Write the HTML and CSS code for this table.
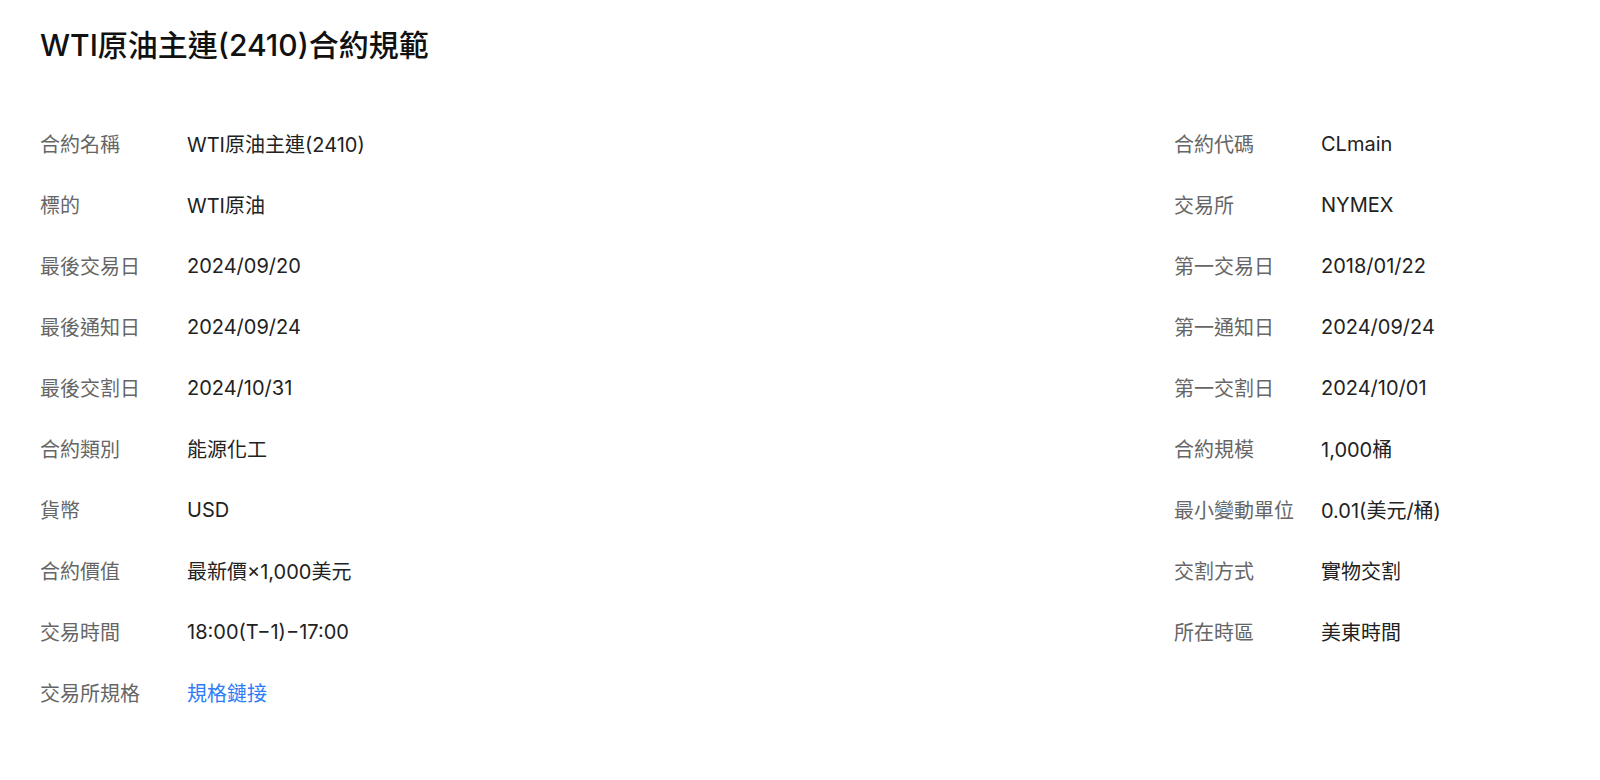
FILE: index.html
```html
<!DOCTYPE html>
<html lang="zh-Hant">
<head>
<meta charset="utf-8">
<title>WTI原油主連(2410)合約規範</title>
<link rel="stylesheet" href="styles.css">
</head>
<body>
<div class="page">
  <h1 class="title">WTI原油主連(2410)合約規範</h1>
  <div class="spec">
    <div class="col">
      <div class="row"><span class="label">合約名稱</span><span class="value">WTI原油主連(2410)</span></div>
      <div class="row"><span class="label">標的</span><span class="value">WTI原油</span></div>
      <div class="row"><span class="label">最後交易日</span><span class="value">2024/09/20</span></div>
      <div class="row"><span class="label">最後通知日</span><span class="value">2024/09/24</span></div>
      <div class="row"><span class="label">最後交割日</span><span class="value">2024/10/31</span></div>
      <div class="row"><span class="label">合約類別</span><span class="value">能源化工</span></div>
      <div class="row"><span class="label">貨幣</span><span class="value">USD</span></div>
      <div class="row"><span class="label">合約價值</span><span class="value">最新價×1,000美元</span></div>
      <div class="row"><span class="label">交易時間</span><span class="value">18:00(T−1)−17:00</span></div>
      <div class="row"><span class="label">交易所規格</span><a class="value link" href="#">規格鏈接</a></div>
    </div>
    <div class="col">
      <div class="row"><span class="label">合約代碼</span><span class="value">CLmain</span></div>
      <div class="row"><span class="label">交易所</span><span class="value">NYMEX</span></div>
      <div class="row"><span class="label">第一交易日</span><span class="value">2018/01/22</span></div>
      <div class="row"><span class="label">第一通知日</span><span class="value">2024/09/24</span></div>
      <div class="row"><span class="label">第一交割日</span><span class="value">2024/10/01</span></div>
      <div class="row"><span class="label">合約規模</span><span class="value">1,000桶</span></div>
      <div class="row"><span class="label">最小變動單位</span><span class="value">0.01(美元/桶)</span></div>
      <div class="row"><span class="label">交割方式</span><span class="value">實物交割</span></div>
      <div class="row"><span class="label">所在時區</span><span class="value">美東時間</span></div>
    </div>
  </div>
</div>
</body>
</html>
```

FILE: styles.css
```css
* { box-sizing: border-box; }
html, body {
  margin: 0;
  padding: 0;
  background: #fff;
}
body {
  font-family: "Inter", "Noto Sans CJK TC", "Noto Sans", sans-serif;
  color: #222;
}
.page {
  padding: 26px 40px 40px 40px;
}
.title {
  margin: 0;
  font-size: 30px;
  line-height: 38px;
  font-weight: 500;
  color: #111;
}
.spec {
  display: grid;
  grid-template-columns: 1fr 386px;
  margin-top: 49px;
}
.col {
  display: flex;
  flex-direction: column;
}
.row {
  display: flex;
  align-items: center;
  height: 61px;
  font-size: 20px;
}
.label {
  width: 147px;
  flex: none;
  color: #666;
}
.value {
  color: #222;
}
.link {
  color: #2e7cf6;
  text-decoration: none;
}
```
